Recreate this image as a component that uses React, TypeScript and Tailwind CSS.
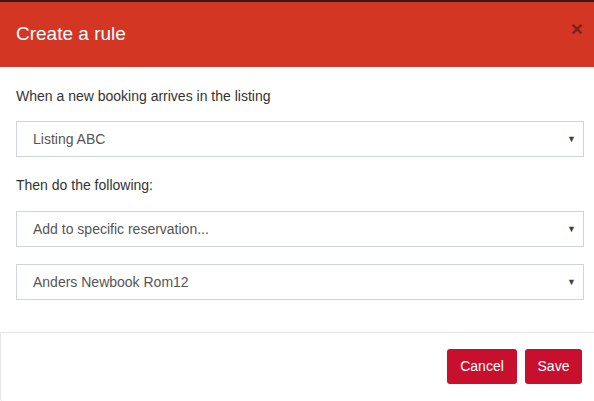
// select-like row used three times in the dialog
function SelectBox({ value }: { value: string }) {
  return (
    <div className="flex h-[36px] items-center justify-between border border-[#cfd4dd] bg-white pl-4 pr-[7px]">
      <span className="text-[14px] text-[#555]">{value}</span>
      <span className="text-[9px] leading-none text-[#444]">▼</span>
    </div>
  )
}

export default function App() {
  return (
    <div className="h-[401px] w-[594px] overflow-hidden bg-white font-['Liberation_Sans',Arial,sans-serif]">
      <div className="h-[2px] bg-[#3d1616]" />
      {/* header */}
      <div className="flex h-[65px] items-center justify-between bg-[#d43624] pl-4 pr-[11px]">
        <h1 className="text-[19px] text-white">Create a rule</h1>
        <button type="button" className="mb-[13px] text-[21px] font-bold leading-none text-[#7a2219]">
          ×
        </button>
      </div>

      {/* body */}
      <div className="pl-4 pr-[10px] pt-[19px] pb-8">
        <p className="text-[14px] leading-5 text-[#333]">When a new booking arrives in the listing</p>
        <div className="mt-[15px]">
          <SelectBox value="Listing ABC" />
        </div>
        <p className="mt-[18px] text-[14px] leading-5 text-[#333]">Then do the following:</p>
        <div className="mt-[16px]">
          <SelectBox value="Add to specific reservation..." />
        </div>
        <div className="mt-[17px]">
          <SelectBox value="Anders Newbook Rom12" />
        </div>
      </div>

      {/* footer */}
      <div className="flex h-[70px] items-start justify-end gap-2 rounded-bl-[4px] border-t border-l border-[#e5e5e5] pt-4 pr-[12px]">
        <button type="button" className="h-[35px] w-[70px] rounded-[3px] bg-[#c8102e] text-[14px] text-white">
          Cancel
        </button>
        <button type="button" className="h-[35px] w-[57px] rounded-[3px] bg-[#c8102e] text-[14px] text-white">
          Save
        </button>
      </div>
    </div>
  )
}
